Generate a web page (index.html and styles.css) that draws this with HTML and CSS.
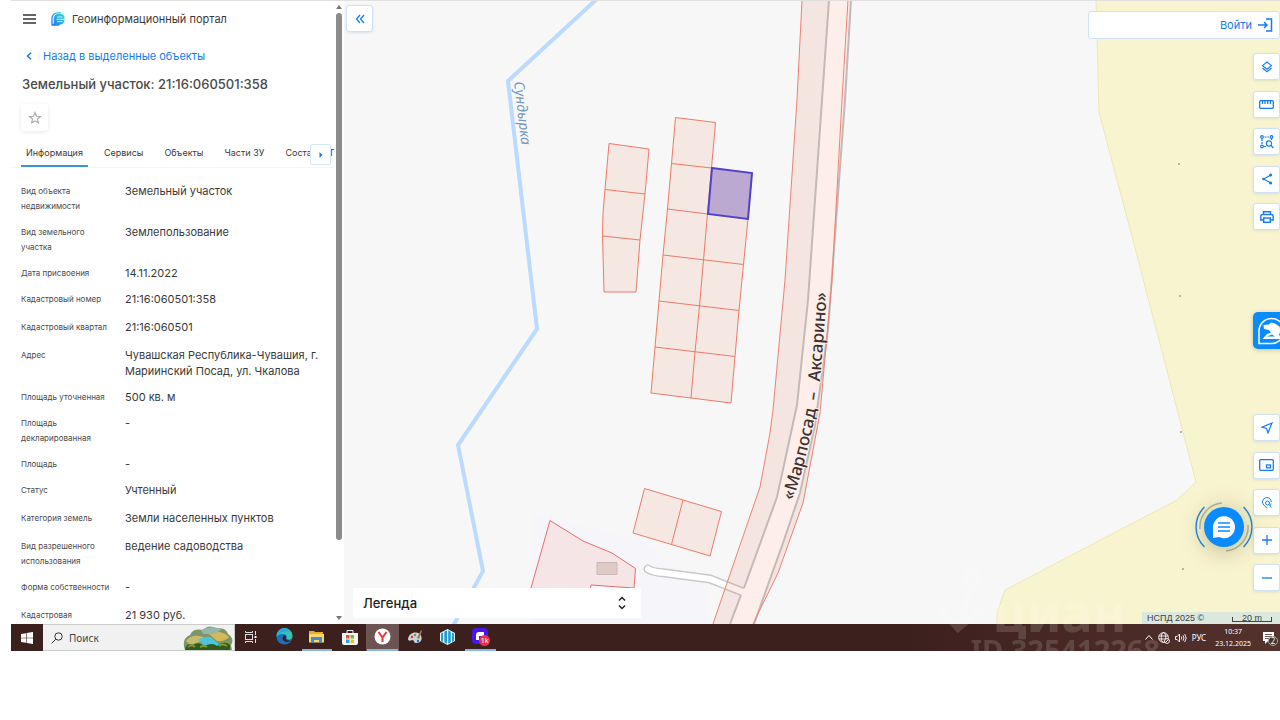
FILE: index.html
```html
<!DOCTYPE html>
<html lang="ru">
<head>
  <meta charset="UTF-8">
  <meta name="viewport" content="width=device-width, initial-scale=1.0">
  <title>Геоинформационный портал</title>
  <link rel="stylesheet" href="styles.css">
</head>
<body>
  <div class="screen">
    <div class="portal">

      <!-- Боковая панель -->
      <aside class="sidebar">
        <div class="sidebar-content">
          <header class="brand">
            <button class="icon-btn" aria-label="Меню">
              <svg width="13" height="10" viewBox="0 0 13 10" stroke="#333" stroke-width="1.5"><path d="M0 1h13M0 5h13M0 9h13"/></svg>
            </button>
            <svg class="logo" width="14" height="14" viewBox="0 0 14 14">
              <defs>
                <linearGradient id="logoFill" x1="1" y1="0" x2="0" y2="1">
                  <stop offset="0" stop-color="#2fe0d0"/>
                  <stop offset="1" stop-color="#1f6fff"/>
                </linearGradient>
              </defs>
              <path d="M1 13.500V6.500A5.600 5.600 0 0 1 7 .8h3" fill="none" stroke="url(#logoFill)" stroke-width="1.300"/>
              <path d="M2.800 11.500V6.800A4.800 4.800 0 0 1 8 1.800h1.500A4 4 0 0 1 13.500 6v2A4.500 4.500 0 0 1 9 12.500L8 13.700H1L1 12.500z" fill="url(#logoFill)"/>
              <path d="M6 5h5.500M5.500 7.300h8M6 9.600h5.500" stroke="#fff" stroke-width=".8"/>
            </svg>
            <span class="brand-name">Геоинформационный портал</span>
          </header>

          <a class="back-link" href="#">
            <svg width="6" height="8" viewBox="0 0 6 8" fill="none" stroke="#147cf0" stroke-width="1.500"><path d="M5 .7 1.500 4 5 7.300"/></svg>
            Назад в выделенные объекты
          </a>
          <h1>Земельный участок: 21:16:060501:358</h1>
          <button class="favorite" aria-label="В избранное">
            <svg width="14" height="14" viewBox="0 0 14 14" fill="none" stroke="#a9a9a9" stroke-width="1.100"><path d="m7 1.500 1.500 3.700 4 .3-3.100 2.500 1 3.900L7 9.800l-3.400 2.100 1-3.900L1.500 5.500l4-.3z"/></svg>
          </button>

          <nav class="tabs">
            <button class="tab active">Информация</button>
            <button class="tab">Сервисы</button>
            <button class="tab">Объекты</button>
            <button class="tab">Части ЗУ</button>
            <button class="tab">Состав ЕЗП</button>
            <button class="tabs-next" aria-label="Вперёд">
              <svg width="4" height="6" viewBox="0 0 4 6" fill="#147cf0"><path d="m.5 0 3 3-3 3z"/></svg>
            </button>
          </nav>

          <dl class="details">
            <div class="row"><dt>Вид объекта недвижимости</dt><dd>Земельный участок</dd></div>
            <div class="row"><dt>Вид земельного участка</dt><dd>Землепользование</dd></div>
            <div class="row compact"><dt>Дата присвоения</dt><dd>14.11.2022</dd></div>
            <div class="row"><dt>Кадастровый номер</dt><dd>21:16:060501:358</dd></div>
            <div class="row"><dt>Кадастровый квартал</dt><dd>21:16:060501</dd></div>
            <div class="row"><dt>Адрес</dt><dd>Чувашская Республика-Чувашия, г. Мариинский Посад, ул. Чкалова</dd></div>
            <div class="row compact"><dt>Площадь уточненная</dt><dd>500 кв. м</dd></div>
            <div class="row"><dt>Площадь декларированная</dt><dd>-</dd></div>
            <div class="row compact"><dt>Площадь</dt><dd>-</dd></div>
            <div class="row"><dt>Статус</dt><dd>Учтенный</dd></div>
            <div class="row"><dt>Категория земель</dt><dd>Земли населенных пунктов</dd></div>
            <div class="row"><dt>Вид разрешенного использования</dt><dd>ведение садоводства</dd></div>
            <div class="row"><dt>Форма собственности</dt><dd>-</dd></div>
            <div class="row"><dt>Кадастровая стоимость</dt><dd>21 930 руб.</dd></div>
          </dl>
        </div>
        <div class="scrollbar">
          <svg width="6" height="4" viewBox="0 0 6 4" fill="#777"><path d="m3 0 3 4H0z"/></svg>
          <div class="track"><div class="thumb"></div></div>
          <svg width="6" height="4" viewBox="0 0 6 4" fill="#777"><path d="m3 4 3-4H0z"/></svg>
        </div>
      </aside>

      <!-- Карта -->
      <main class="map">
        <svg class="map-canvas" viewBox="344 1 936 623" preserveAspectRatio="xMidYMid slice">
          <path class="settlement" d="M533 513 640 540 707 590V624H533z"/>
          <path class="field" d="M1096 0 1099 112 1133 240 1196 482 1177 500 1005 590 997 613V625H1282V0z"/>
          <g fill="#aaa37c">
            <circle cx="1179" cy="164" r="1"/><circle cx="1180" cy="296" r="1"/><circle cx="1181" cy="432" r="1"/><circle cx="1183" cy="569" r="1"/>
          </g>

          <path class="river" d="M599-3 508 81 537 329 458 445 483 571 453 626"/>

          <!-- дорога -->
          <path class="lane-edge" d="M648 569Q652 572 665 573L710 579 748 594"/>
          <path class="lane" d="M648 569Q652 572 665 573L710 579 748 594"/>
          <path class="parcel-fill" d="M802 0 797 100 785 280 773 410 770 433 760 487 727 583 713 624H753L778 573 803 503 820 413 832 280 842 100 848 0z"/>
          <path class="road" d="M829 0 822 100 808 300 797 405 777 497 744 588 741 595 730 624H754L783 543 800 493 815 425 828 320 845 100 851 0z"/>
          <path class="road-edge" d="M829 0 822 100 808 300 797 405 777 497 744 588M741 595 730 624M851 0 845 100 828 330 815 425 800 493 783 543 754 624"/>
          <path class="boundary" d="M802 0 797 100 785 280 773 410 770 433 760 487 727 583 713 624M848 0 842 100 832 280 820 413 803 503 778 573 753 624"/>

          <!-- участки -->
          <g class="parcel">
            <path d="M609 143.500 649 149 645 194 640 240 636 292H604L602.500 236 603 213 605 189.500zM605 189.500 645 194M602.500 236 640 240"/>
            <path d="M675.500 117.500 715.500 122.500 711.500 168 752 173 748 219 743.500 264.500 739 310.500 735 356.500 731 403 691 398 651 393 655 347 659 301 663 255 667.500 209 671.500 163.500z"/>
            <path d="M671.500 163.500 711.500 168 707.500 213.500 703.500 260 699.500 306 695 352 691 398M667.500 209 748 219M663 255 743.500 264.500M659 301 739 310.500M655 347 735 356.500" fill="none"/>
            <path d="M644.500 488.500 721.500 511.500 710 556 633 533zM683 500 671.500 544.500"/>
            <path class="plot" d="M531 588 550 520.500 583 541 612 553 635.500 568.500 634 588 591 585 590 590"/>
          </g>
          <path class="selected" d="M712 168 752 173 748 219 708 214z"/>
          <path class="building" d="M597 562.500H617V574.500H597z"/>

          <path id="riverLine" d="M514 82 522 150" fill="none"/>
          <text class="river-name"><textPath href="#riverLine">Сундырка</textPath></text>
          <path id="roadLine" d="M793 501Q818 420 821 370L828 280" fill="none"/>
          <text class="road-name"><textPath href="#roadLine">«Марпосад</textPath></text>
          <text class="road-name"><textPath href="#roadLine" startOffset="103">–</textPath></text>
          <text class="road-name"><textPath href="#roadLine" startOffset="122">Аксарино»</textPath></text>
        </svg>

        <button class="map-btn collapse" aria-label="Свернуть панель">
          <svg width="10" height="10" viewBox="0 0 10 10" fill="none" stroke="#147cf0" stroke-width="1.300"><path d="M5 1 1.500 5 5 9M9 1 5.500 5 9 9"/></svg>
        </button>

        <button class="login">
          Войти
          <svg width="15" height="14" viewBox="0 0 15 14" fill="none" stroke="#147cf0" stroke-width="1.500"><path d="M0 7h9M6 4l3 3-3 3M8 1h5.500v12H8"/></svg>
        </button>

        <div class="toolbar toolbar-top">
          <button class="map-btn" aria-label="Слои">
            <svg width="12" height="12" viewBox="0 0 12 12" fill="none" stroke="#147cf0" stroke-width="1.100"><path d="m6 1 4.500 3.700L6 8.300 1.500 4.700zM1.500 7 6 10.700 10.500 7"/></svg>
          </button>
          <button class="map-btn" aria-label="Линейка">
            <svg width="15" height="9" viewBox="0 0 15 9" fill="none" stroke="#147cf0" stroke-width="1.300"><rect x=".7" y=".7" width="13.600" height="7.600" rx="1"/><path d="M3.500 1v3M6 1v3M8.700 1v3M11.400 1v3"/></svg>
          </button>
          <button class="map-btn" aria-label="Поиск по области">
            <svg width="14" height="14" viewBox="0 0 14 14" fill="none" stroke="#147cf0" stroke-width="1.200"><circle cx="2" cy="2" r="1.300"/><circle cx="11.500" cy="2" r="1.300"/><circle cx="2" cy="11.500" r="1.300"/><path d="M4.500 2h4.500" stroke-dasharray="2 1"/><path d="M2 4v6M4 11.500h2M11.500 4v1" stroke-dasharray="2 1"/><circle cx="9" cy="8.500" r="2.600"/><path d="m11 10.500 2.500 2.500"/></svg>
          </button>
          <button class="map-btn" aria-label="Поделиться">
            <svg width="12" height="12" viewBox="0 0 12 12" fill="none" stroke="#147cf0" stroke-width="1.100"><path d="M9.500 2.200 2.500 6l7 3.800"/><g fill="#147cf0"><circle cx="9.600" cy="2" r="1"/><circle cx="2.400" cy="6" r=".7"/><circle cx="9.600" cy="10" r="1"/></g></svg>
          </button>
          <button class="map-btn" aria-label="Печать">
            <svg width="14" height="12" viewBox="0 0 14 12" fill="none" stroke="#147cf0" stroke-width="1.400"><path d="M3.500 3.500V.7h7v2.800M3.500 9H.8V5.500a2 2 0 0 1 2-2h8.400a2 2 0 0 1 2 2V9h-2.700"/><rect x="3.700" y="7" width="6.600" height="4.300"/></svg>
          </button>
        </div>

        <button class="assistant" aria-label="Помощник">
          <svg width="30" height="30" viewBox="0 0 30 30">
            <path d="M2 27.500V14.500a12.500 12.500 0 1 1 12.500 13z" fill="none" stroke="#fff" stroke-width="1.500"/>
            <path d="M6.500 9 12 8.500l2-2 4 1 4.500 3 1 5-1.500 3 2.500 4.500H5.500L10 18l4-1.500-2-2.500-5-1z" fill="#fff"/>
            <path d="m10 20.500 5-2 3 2z" fill="#0a8bfb"/>
          </svg>
        </button>

        <div class="toolbar toolbar-bottom">
          <button class="map-btn" aria-label="Моё положение">
            <svg width="12" height="12" viewBox="0 0 12 12" fill="none" stroke="#147cf0" stroke-width="1.200"><path d="M11 1 .8 5.200 5.500 6.500 7 11z"/></svg>
          </button>
          <button class="map-btn" aria-label="Обзорная карта">
            <svg width="15" height="12" viewBox="0 0 15 12" fill="none" stroke="#147cf0" stroke-width="1.300"><rect x=".7" y=".7" width="13.600" height="10.600" rx="1"/><rect x="7.500" y="6" width="4" height="2.800"/></svg>
          </button>
          <button class="map-btn" aria-label="Поиск места">
            <svg width="12" height="12" viewBox="0 0 12 12" fill="none" stroke="#147cf0"><path d="M6.500 11C4 9.500 1.500 7.500 1.500 5a4.400 4.400 0 0 1 8.800 0"/><circle cx="6.500" cy="6" r="2"/><path d="m8 7.500 2.500 3M10 6.500l-.5 2"/></svg>
          </button>
          <button class="map-btn" aria-label="Приблизить">
            <svg width="10" height="10" viewBox="0 0 10 10" stroke="#147cf0" stroke-width="1.300"><path d="M0 5h10M5 0v10"/></svg>
          </button>
          <button class="map-btn" aria-label="Отдалить">
            <svg width="10" height="10" viewBox="0 0 10 10" stroke="#147cf0" stroke-width="1.300"><path d="M0 5h10"/></svg>
          </button>
        </div>

        <button class="chat" aria-label="Чат">
          <svg width="60" height="60" viewBox="0 0 60 60" fill="none">
            <path d="M10.500 10a28 28 0 0 0 0 40M49.500 10a28 28 0 0 1 0 40" stroke="#2787dc" stroke-width="1.500"/>
            <path d="M6 32A24 24 0 0 1 28 6M54 28a24 24 0 0 1-22 26" stroke="#b9b69f" stroke-width="1.500"/>
            <circle class="chat-disc" cx="30" cy="30" r="20"/>
            <path d="M19 41V30a11 11 0 1 1 6 10z" fill="#fff"/>
            <path d="M24 26h12M24 30h12M24 34h12" stroke="#0a8bfb" stroke-width="1.500"/>
          </svg>
        </button>

        <button class="legend">
          Легенда
          <svg width="8" height="14" viewBox="0 0 8 14" fill="none" stroke="#222" stroke-width="1.500"><path d="M1 4.500l3-3 3 3M1 9.500l3 3 3-3"/></svg>
        </button>

        <div class="attribution">
          <span>НСПД 2025 ©</span>
          <span class="scale">20 m</span>
        </div>
      </main>
    </div>

    <!-- Панель задач -->
    <footer class="taskbar">
      <button class="start" aria-label="Пуск">
        <svg width="12" height="12" viewBox="0 0 12 12" fill="#fff"><path d="M0 2l5-.8v4.500H0zM5.600 1.100 12 0v5.700H5.600zM0 6.300h5v4.500L0 10zM5.600 6.300H12V12l-6.400-1.100z"/></svg>
      </button>
      <label class="search">
        <svg width="12" height="12" viewBox="0 0 12 12" fill="none" stroke="#333"><circle cx="7.500" cy="4.500" r="3.700"/><path d="M4.800 7.200.6 11.400"/></svg>
        <input type="text" placeholder="Поиск" aria-label="Поиск">
        <svg width="50" height="25" viewBox="0 0 50 25">
          <path d="M2 25Q-2 14 7 10 10 3 20 5 25-1 33 3 43 2 45 9 52 14 48 20L49 25z" fill="#7d9668"/>
          <path d="M3 16Q9 8 20 12L23 15 7 20z" fill="#c9bb6d"/>
          <path d="M26 9Q38 4 46 12 42 17 34 16z" fill="#d4b85a"/>
          <path d="M18 5Q28 0 39 4L32 9 20 9z" fill="#95b7a9"/>
          <path d="M15 15Q25 9 30 14L38 21H22z" fill="#4dc3dd"/>
          <path d="M2 25Q3 17 10 20 16 16 21 21 30 17 34 21 42 15 47 20L47 25z" fill="#315a1d"/>
          <path d="M5 22q4-3 7 0M17 22q4-2 7 0M36 21q4-3 8 0" stroke="#7a9d2b" stroke-width="2" fill="none"/>
        </svg>
      </label>
      <div class="apps">
        <button class="app" aria-label="Представление задач">
          <svg width="12" height="12" viewBox="0 0 12 12" fill="none" stroke="#ddd"><path d="M.5 0v1.500h7V0M.5 12v-1.500h7V12M10.500 0v4M10.500 8v4"/><rect x=".5" y="3.500" width="7" height="5"/><path d="M9.500 6h2" stroke="#fff" stroke-width="2"/></svg>
        </button>
        <button class="app" aria-label="Edge">
          <svg width="17" height="17" viewBox="0 0 17 17"><circle cx="8.500" cy="8.500" r="8" fill="#1672bd"/><path d="M.5 8A8 8 0 0 1 16.500 8c.2 3.500-4.500 4.500-6 2.800C12 9 10 6 7.500 6 4 5.500 1 7 .5 9z" fill="#36c3b4"/><path d="M.7 7A8 8 0 0 1 8 .5c4 0 6 2 7 4-4-2-9-1-14.300 2.500z" fill="#28a7df"/><path d="M8 7c-3 3-1 7 3 7 2 0 3-.7 4-1.500-2 .3-6-.5-5-3 .4-1-.6-2.500-2-2.500z" fill="#3d211f"/></svg>
        </button>
        <button class="app running" aria-label="Проводник">
          <svg width="15" height="13" viewBox="0 0 15 13"><path d="M0 1h5l1 1h8v10H0z" fill="#e6ae32"/><path d="M0 4h15v8.500H0z" fill="#fbd768"/><path d="M2 7h11v6h-3v-3H5v3H2z" fill="#3f8dd6"/></svg>
        </button>
        <button class="app" aria-label="Магазин">
          <svg width="16" height="16" viewBox="0 0 16 16"><path d="M5 4V1.500h6V4" fill="none" stroke="#eee"/><path d="M0 4h16v10a2 2 0 0 1-2 2H2a2 2 0 0 1-2-2z" fill="#f5f5f5"/><path d="M4 6h3.500v3.500H4z" fill="#e8542c"/><path d="M8.500 6H12v3.500H8.500z" fill="#7fb833"/><path d="M4 10.500h3.500V14H4z" fill="#2aa2e6"/><path d="M8.500 10.500H12V14H8.500z" fill="#f9ba22"/></svg>
        </button>
        <button class="app running current" aria-label="Яндекс Браузер">
          <svg width="17" height="17" viewBox="0 0 17 17" fill="none"><circle cx="8.500" cy="8.500" r="8" fill="#fff"/><path d="m4.500 4 4 5.500 4-5.500M8.500 9v5" stroke="#f5313c" stroke-width="2"/></svg>
        </button>
        <button class="app" aria-label="Paint">
          <svg width="17" height="16" viewBox="0 0 17 16"><path d="M1 10C2 4 8 2 13 5c3 4 2 9-4 9-3 0-1-3-4-3-2 1-4 1-4-1z" fill="#c9d4d6"/><path d="m10 9 4-8 1 1-3 8z" fill="#a5764a"/><circle cx="5" cy="8" r="1.200" fill="#d34"/><circle cx="8" cy="6" r="1.200" fill="#4a4"/><circle cx="11" cy="12" r="1.200" fill="#36c"/></svg>
        </button>
        <button class="app" aria-label="Карты">
          <svg width="17" height="16" viewBox="0 0 17 16"><path d="m8.500 0 7.500 4v8l-7.500 4L1 12V4z" fill="#e6f5fb"/><path d="M2 4.500 4 3.500v9.500l-2-1zM5.300 2.700 8 1.300v13.400l-2.700-1.400zM9.200 1.300l2.600 1.400v10.600l-2.600 1.400zM13 3.500l2 1V12l-2 1z" fill="#249ccc"/></svg>
        </button>
        <button class="app running" aria-label="Мессенджер">
          <svg width="18" height="18" viewBox="0 0 18 18"><rect width="16" height="16" rx="4" fill="#4a16e8"/><path d="M12 4H7a3 3 0 0 0-3 3v5h3V8h5z" fill="#fff"/><circle cx="12.500" cy="12.500" r="5.500" fill="#e8304b"/><text x="12.500" y="15" class="badge-text">1k</text></svg>
        </button>
      </div>
      <div class="tray">
        <svg width="8" height="5" viewBox="0 0 8 5" fill="none" stroke="#fff"><path d="m.5 4.500 3.500-4 3.500 4"/></svg>
        <svg width="12" height="12" viewBox="0 0 12 12" fill="none" stroke="#fff" stroke-width=".9"><circle cx="5.500" cy="5.500" r="4.800"/><ellipse cx="5.500" cy="5.500" rx="2.200" ry="4.800"/><path d="M1 4h9M1 7h9"/><circle cx="9" cy="9" r="2.400" fill="#52302b"/><path d="m7.500 10.500 3-3"/></svg>
        <svg width="12" height="10" viewBox="0 0 12 10" fill="none" stroke="#fff" stroke-width=".9"><path d="M.5 3.500h1.700L4.500 1v8L2.200 6.500H.5zM6.300 3.500q1 1.500 0 3M8 2.300q2 2.700 0 5.400M9.700 1q3 4 0 8"/></svg>
        <span class="lang">РУС</span>
        <div class="clock">
          <time>10:37</time>
          <time>23.12.2025</time>
        </div>
        <div class="notifications">
          <svg width="12" height="12" viewBox="0 0 12 12"><path d="M0 0h11v9H5l-3 3V9H0z" fill="#fff"/><path d="M2 2.500h7M2 4.500h7M2 6.500h7" stroke="#52302b" stroke-width=".8"/></svg>
          <span class="count">2</span>
        </div>
      </div>
    </footer>

    <!-- Водяной знак -->
    <div class="watermark">
      <svg class="watermark-logo" width="50" height="64" viewBox="0 0 50 64" fill="none" stroke="currentColor" stroke-width="6"><circle cx="36" cy="10" r="7"/><path d="m2 38 20 22L48 38M22 60 36 18"/></svg>
      <div class="watermark-text">
        <span class="watermark-name">циан</span>
        <span class="watermark-id">ID 325412268</span>
      </div>
    </div>
  </div>
</body>
</html>
```
FILE: styles.css
```css
* {
  box-sizing: border-box;
}

body {
  margin: 0;
  font-family: Inter, "Liberation Sans", sans-serif;
  font-size: 11px;
  color: #3a3a3a;
  background: #fff;
}

button {
  margin: 0;
  padding: 0;
  border: none;
  background: none;
  font: inherit;
  color: inherit;
  cursor: pointer;
}

svg {
  display: block;
  flex: none;
}

.screen {
  position: relative;
  display: flex;
  flex-direction: column;
  height: 100vh;
  padding: 0 0 69px 11px;
  overflow: hidden;
}

.portal {
  display: flex;
  flex: 1;
  min-height: 0;
  border-top: 1px solid #e4dfdf;
}

/* Боковая панель */
.sidebar {
  display: flex;
  flex: none;
  width: 333px;
  background: #fff;
}

.sidebar-content {
  flex: 1;
  min-width: 0;
  overflow: hidden;
}

.brand {
  display: flex;
  align-items: center;
  height: 36px;
  padding-left: 12px;
}

.logo {
  margin: 0 7px 0 15px;
}

.back-link {
  display: flex;
  align-items: center;
  gap: 11px;
  height: 16px;
  margin-top: 11px;
  padding-left: 15px;
  color: #147cf0;
  text-decoration: none;
}

h1 {
  margin: 11px 0 11px 11px;
  font-size: 13px;
  font-weight: 500;
  line-height: 18px;
  color: #4a4a4a;
}

.favorite {
  display: flex;
  align-items: center;
  justify-content: center;
  width: 27px;
  height: 27px;
  margin-left: 10px;
  border-radius: 3px;
  box-shadow: 0 1px 4px rgba(0, 0, 0, 0.1);
}

.tabs {
  position: relative;
  display: flex;
  gap: 11px;
  height: 29px;
  margin-top: 8px;
  padding-left: 10px;
  border-bottom: 1px solid #f5f5f5;
  overflow: hidden;
}

.tab {
  flex: none;
  padding: 0 5px;
  border-bottom: 2px solid transparent;
  font-size: 9px;
}

.tab.active {
  border-color: #4290d8;
}

.tabs-next {
  position: absolute;
  top: 5px;
  right: 3px;
  display: flex;
  align-items: center;
  justify-content: center;
  width: 21px;
  height: 21px;
  border: 1px solid #d5e8f8;
  border-radius: 2px;
  background: #fff;
}

.details {
  margin: 15px 0 0;
  padding: 0 4px 0 10px;
}

.row {
  display: grid;
  grid-template-columns: 90px 1fr;
  gap: 14px;
  min-height: 28px;
  padding-bottom: 10px;
}

.row.compact {
  min-height: 26px;
}

.row dt {
  padding-top: 1px;
  font-size: 8px;
  line-height: 15px;
  color: #4a4a4a;
}

.row dd {
  margin: 0;
  line-height: 16px;
}

.scrollbar {
  display: flex;
  flex: none;
  flex-direction: column;
  align-items: center;
  width: 10px;
  padding: 4px 0;
}

.track {
  flex: 1;
  margin: 4px 0;
}

.thumb {
  width: 6px;
  height: 88%;
  border-radius: 3px;
  background: #8b8b8b;
}

/* Карта */
.map {
  position: relative;
  flex: 1;
  min-width: 0;
  overflow: hidden;
  background: #f7f7f7;
}

.map-canvas {
  width: 100%;
  height: 100%;
}

.settlement {
  fill: #f5f5fa;
}

.field {
  fill: #f8f4cf;
  stroke: #ece8b4;
}

.river {
  fill: none;
  stroke: #bbdaff;
  stroke-width: 4;
}

.road {
  fill: #feeeea;
}

.road-edge {
  fill: none;
  stroke: #c3b9b6;
  stroke-width: 2;
}

.lane-edge,
.lane {
  fill: none;
  stroke: #c9c9c9;
  stroke-width: 9;
  stroke-linecap: round;
}

.lane {
  stroke: #fff;
  stroke-width: 6;
}

.boundary {
  fill: none;
  stroke: #ee8172;
}

.parcel-fill {
  fill: rgba(225, 80, 40, 0.1);
}

.parcel {
  fill: #f5e7e2;
  stroke: #ee7a68;
}

.parcel .plot {
  fill: #f5e5e6;
  stroke: #ec6d6d;
}

.selected {
  fill: #bba9d1;
  stroke: #5142ce;
  stroke-width: 2;
}

.building {
  fill: #dfcbc6;
  stroke: #c9b8b5;
}

.river-name {
  font-family: "Noto Sans", sans-serif;
  font-size: 14px;
  font-style: italic;
  fill: #7397bd;
}

.road-name {
  font-family: "Noto Sans", sans-serif;
  font-size: 17px;
  font-weight: 500;
  fill: #3c3331;
  stroke: #feeeea;
  stroke-width: 2;
  paint-order: stroke;
}

.map-btn {
  display: flex;
  align-items: center;
  justify-content: center;
  width: 27px;
  height: 27px;
  border: 1px solid #cfe2f5;
  border-radius: 3px;
  background: #fff;
  box-shadow: 0 1px 3px rgba(30, 80, 140, 0.12);
}

.collapse {
  position: absolute;
  top: 4px;
  left: 2px;
}

.login {
  position: absolute;
  top: 10px;
  right: 0;
  display: flex;
  align-items: center;
  justify-content: flex-end;
  gap: 6px;
  width: 192px;
  height: 28px;
  padding-right: 6px;
  border: 1px solid #cfe2f5;
  border-radius: 3px;
  background: #fff;
  color: #147cf0;
}

.toolbar {
  position: absolute;
  right: 0;
  display: flex;
  flex-direction: column;
  justify-content: space-between;
  height: 177px;
}

.toolbar-top {
  top: 52px;
}

.toolbar-bottom {
  bottom: 33px;
}

.assistant {
  position: absolute;
  top: 311px;
  right: -10px;
  width: 37px;
  height: 37px;
  padding-left: 4px;
  border-radius: 5px;
  background: #0a8bfb;
  box-shadow: 0 1px 5px rgba(0, 0, 0, 0.2);
}

.chat {
  position: absolute;
  right: 26px;
  bottom: 67px;
}

.chat svg {
  overflow: visible;
}

.chat-disc {
  fill: #0a8bfb;
  filter: drop-shadow(0 3px 12px rgba(80, 80, 40, 0.4));
}

.legend {
  position: absolute;
  bottom: 6px;
  left: 9px;
  display: flex;
  align-items: center;
  justify-content: space-between;
  width: 288px;
  height: 30px;
  padding: 0 15px 0 10px;
  background: #fff;
  font-size: 13px;
  font-weight: 500;
  color: #222;
}

.attribution {
  position: absolute;
  right: 0;
  bottom: 0;
  display: flex;
  align-items: center;
  justify-content: space-between;
  width: 138px;
  height: 12px;
  padding: 0 8px 0 5px;
  background: #dce8dd;
  font-family: "Liberation Sans", sans-serif;
  font-size: 9px;
  color: #444;
}

.scale {
  align-self: flex-end;
  width: 40px;
  height: 5px;
  margin-bottom: 2px;
  border: solid #444;
  border-width: 0 1px 1px;
  line-height: 2px;
  text-align: center;
}

/* Панель задач */
.taskbar {
  display: flex;
  flex: none;
  height: 27px;
  background: linear-gradient(90deg, #3c201e 70%, #54322d);
  font-family: "Noto Sans", sans-serif;
  color: #fff;
}

.start {
  display: flex;
  align-items: center;
  justify-content: center;
  width: 32px;
}

.search {
  display: flex;
  align-items: center;
  width: 192px;
  padding: 0 1px 0 8px;
  border: 1px solid #ccc;
  border-left: none;
  background: #f2f1f1;
}

.search input {
  flex: 1;
  min-width: 0;
  margin-left: 6px;
  padding: 0;
  border: none;
  outline: none;
  background: none;
  font: 10px "Noto Sans", sans-serif;
}

.search input::placeholder {
  color: #444;
}

.apps {
  display: flex;
  width: 262px;
}

.app {
  display: flex;
  flex: 1;
  align-items: center;
  justify-content: center;
  border-bottom: 2px solid transparent;
}

.app.running {
  border-image: linear-gradient(90deg, transparent 8%, #86b6e6 8%, #86b6e6 92%, transparent 92%) 2;
}

.app.current {
  background: #6b5452;
}

.badge-text {
  font-size: 7px;
  fill: #fff;
  text-anchor: middle;
}

.tray {
  display: flex;
  align-items: center;
  gap: 5px;
  margin-left: auto;
  padding-right: 1px;
  font-size: 8px;
}

.clock {
  display: flex;
  flex-direction: column;
  margin: 0 7px 0 4px;
  font-size: 7px;
  line-height: 12px;
  text-align: center;
}

.notifications {
  position: relative;
  width: 16px;
}

.count {
  position: absolute;
  top: 4px;
  right: 1px;
  width: 10px;
  height: 10px;
  border: 1px solid #aaa;
  border-radius: 50%;
  background: #333;
  line-height: 8px;
  text-align: center;
}

/* Водяной знак поверх экрана */
.watermark {
  position: absolute;
  right: 120px;
  bottom: 55px;
  display: flex;
  color: #fff;
  opacity: 0.14;
  pointer-events: none;
}

.watermark-logo {
  margin: -20px -15px 0 0;
}

.watermark-text {
  display: flex;
  flex-direction: column;
  font-family: "Noto Sans", sans-serif;
  font-weight: 700;
}

.watermark-name {
  padding-left: 22px;
  font-size: 52px;
  line-height: 46px;
}

.watermark-id {
  font-size: 29px;
  line-height: 30px;
}
```
